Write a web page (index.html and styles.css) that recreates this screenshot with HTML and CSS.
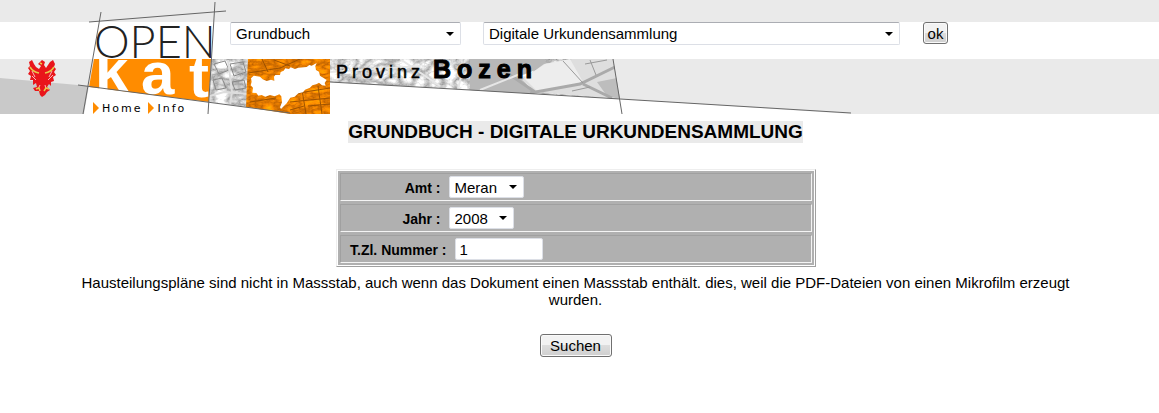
FILE: index.html
```html
<!DOCTYPE html>
<html lang="de">
<head>
  <meta charset="utf-8">
  <title>OPENkat - Grundbuch</title>
  <meta name="viewport" content="width=device-width, initial-scale=1.0">
  <link rel="stylesheet" href="styles.css">
</head>
<body>
  <header class="header">
    <svg class="banner" width="852" height="114" viewBox="0 0 852 114" role="img" aria-label="OPENkat Provinz Bozen">
      <defs>
        <filter id="aerial" x="0" y="0" width="100%" height="100%" color-interpolation-filters="sRGB">
          <feTurbulence type="turbulence" baseFrequency="0.07 0.1" numOctaves="4" seed="8"/>
          <feColorMatrix values="0.7 0 0 0 0.6  0.7 0 0 0 0.6  0.7 0 0 0 0.6  0 0 0 0 1"/>
          <feComposite in2="SourceGraphic" operator="in"/>
        </filter>
        <filter id="orangeMap" x="0" y="0" width="100%" height="100%" color-interpolation-filters="sRGB">
          <feTurbulence type="turbulence" baseFrequency="0.08 0.16" numOctaves="3" seed="4"/>
          <feColorMatrix values="0.6 0 0 0 0.74  0.4 0 0 0 0.38  0 0 0 0 0  0 0 0 0 1"/>
          <feComposite in2="SourceGraphic" operator="in"/>
        </filter>
        <clipPath id="plan"><path d="M330 59H613L620 99 470 90 330 82Z"/></clipPath>
        <clipPath id="town"><path d="M211 59H248V107L209 102Z"/></clipPath>
        <clipPath id="district"><path d="M248 59H330V114H290L246 107Z"/></clipPath>
      </defs>

      <!-- left strip -->
      <path fill="#c9c9c9" d="M0 78 89 86 84 114H0Z"/>
      <path fill="#fff" d="M89 86 290 110V114H84Z"/>
      <path fill="#fff" d="M330 82 470 90 620 99 852 114H330Z"/>

      <!-- eagle -->
      <g transform="translate(28 60)">
        <path fill="#e9151b" d="M12 2 14 0 17 2 16 5 18 8 20 5 22 2 25 0 27 4 26 7 28 9 26 12 28 15 25 17 26 21 23 22 23 26 21 24 19 27 22 30 19 32 17 35 14 37 12 35 11 31 7 31 5 28 9 27 8 23 5 25 5 20 2 20 3 16 0 14 2 11 0 8 2 6 1 2 4 0 6 4 8 7 11 9 13 6 10 4Z"/>
        <path fill="none" stroke="#fff" stroke-width=".7" d="M4 11 7 17M4 16 8 20M24 11 21 17M25 15 20 20M12 25 10 29M17 25 18 29"/>
        <path fill="none" stroke="#e7c84a" stroke-width="1.5" d="M2 7Q5 12 11 13M26 7Q23 12 17 13M8 29 11 28 12 31M16 31 18 28 21 29M12 3 14 4"/>
      </g>

      <!-- logo -->
      <path fill="#ff8c00" d="M94 59H211L209 102 89 87Z"/>
      <text class="logo-kat"><tspan x="95" y="91">k</tspan><tspan x="141" y="94">a</tspan><tspan x="189" y="97">t</tspan></text>
      <path fill="#fff" d="M95 22H212V59H95Z"/>
      <text class="logo-open" x="94" y="58">OPEN</text>

      <!-- aerial photo and district map -->
      <path fill="#999" filter="url(#aerial)" d="M211 59H248V107L209 102Z"/>
      <g clip-path="url(#town)" fill="none">
        <path stroke="#888" d="M214 64 225 61 229 70 219 74ZM230 64 243 62 246 72 234 76ZM213 80 222 78 226 88 216 90ZM232 82 244 80 246 88 235 90Z"/>
        <path stroke="#ddd" stroke-width="2" d="M210 96 224 92 248 94M228 60 232 92 230 106"/>
      </g>
      <path fill="#e07c00" filter="url(#orangeMap)" d="M248 59H330V114H290L246 107Z"/>
      <g clip-path="url(#district)" fill="none" stroke="#9c5200">
        <path d="M248 73 280 68 300 59M262 59 268 72M274 60 290 66M292 94 330 88M290 102 330 98M302 90 306 114M318 86 322 114M250 102 276 98M308 106 330 104M290 110 304 106"/>
      </g>
      <path fill="#fff" transform="translate(245 55) scale(.3333)" d="M20 80 18 70 26 62 45 65 53 73 65 78 78 74 88 77 87 65 91 60 105 60 107 51 116 47 121 40 132 42 137 37 150 42 160 38 185 36 193 30 200 32 215 24 211 34 213 45 222 50 225 62 245 75 239 84 242 92 231 91 222 83 214 88 202 91 195 98 180 104 174 112 160 115 149 125 136 128 125 145 108 162 105 157 111 142 109 124 103 118 89 124 75 120 61 125 50 120 40 122 34 114 22 113 24 98 17 91Z"/>
      <path fill="#999" filter="url(#aerial)" d="M330 59H613L620 99 470 90 330 82Z"/>
      <g clip-path="url(#plan)">
        <path fill="#b8b8b8" d="M470 59H545V66L520 76 536 96 470 92Z"/>
        <path fill="#dedede" d="M544 64 572 59H613L620 99 536 92 522 80Z"/>
        <path fill="#ededed" d="M524 78 545 64 570 59 583 82 538 92Z"/>
        <path fill="#bdbdbd" d="M597 82 617 78 620 99 607 96Z"/>
        <path fill="none" stroke="#aaa" stroke-width="3" d="M530 93 580 84 617 66M500 68 535 92M583 84 612 98"/>
        <path fill="none" stroke="#999" d="M563 61 583 83M590 60 596 75M585 64 607 60M572 91 590 87"/>
        <path fill="none" stroke="#e6e6e6" stroke-width="2" d="M330 72 420 66M400 59 440 86M465 60 458 89M480 90 520 74"/>
      </g>
      <text class="provinz" x="336" y="78">Provinz</text>
      <text class="bozen" x="433" y="78">Bozen</text>

      <!-- drafting lines -->
      <g fill="none" stroke="#666">
        <path d="M101 12 83 114M215 2 208 114M89 22 226 11M78 85 290 113"/>
        <path d="M330 82 470 90 620 99 851 113M613 59 622 114"/>
      </g>
    </svg>

    <form class="search-type">
      <select class="select-archive" aria-label="Archiv">
        <option>Grundbuch</option>
      </select>
      <select class="select-collection" aria-label="Sammlung">
        <option>Digitale Urkundensammlung</option>
      </select>
      <button type="submit" class="btn-ok">ok</button>
    </form>

    <nav class="nav">
      <a href="#">Home</a>
      <a href="#">Info</a>
    </nav>
  </header>

  <main class="content">
    <h1><span>GRUNDBUCH - DIGITALE URKUNDENSAMMLUNG</span></h1>

    <form class="search">
      <div class="fields">
        <div class="field">
          <label for="amt">Amt :</label>
          <select id="amt">
            <option>Meran</option>
          </select>
        </div>
        <div class="field">
          <label for="jahr">Jahr :</label>
          <select id="jahr">
            <option>2008</option>
          </select>
        </div>
        <div class="field">
          <label for="nummer" class="wide">T.Zl. Nummer :</label>
          <input type="text" id="nummer" value="1">
        </div>
      </div>

      <p class="note">Hausteilungspläne sind nicht in Massstab, auch wenn das Dokument einen Massstab enthält. dies, weil die PDF-Dateien von einen Mikrofilm erzeugt wurden.</p>

      <button type="submit" class="btn-search">Suchen</button>
    </form>
  </main>
</body>
</html>
```

FILE: styles.css
```css
* {
  box-sizing: border-box;
}

body {
  margin: 0;
  font-family: "Liberation Sans", Arial, sans-serif;
  font-size: 15px;
  line-height: 17px;
  background: #fff;
  color: #000;
}

/* Header */
.header {
  position: relative;
  padding-top: 22px;
  overflow: hidden;
  background: linear-gradient(#eaeaea 22px, #fff 22px, #fff 59px, #eaeaea 59px);
}

.banner {
  position: absolute;
  top: 0;
  left: 0;
}

.logo-open {
  font-family: Lato, sans-serif;
  font-weight: 300;
  font-size: 45px;
  fill: #222;
}

.logo-kat {
  font-weight: bold;
  font-size: 60px;
  fill: #fff;
}

.provinz {
  font-size: 18px;
  letter-spacing: 4px;
  stroke: #000;
  stroke-width: 0.5;
}

.bozen {
  font-size: 25px;
  font-weight: bold;
  letter-spacing: 6px;
  stroke: #000;
}

.search-type {
  position: relative;
  display: flex;
  padding-left: 230px;
}

.nav {
  position: relative;
  display: flex;
  gap: 6px;
  padding: 59px 0 0 93px;
}

.nav a {
  display: flex;
  font-family: "DejaVu Sans", Verdana, sans-serif;
  font-size: 11px;
  line-height: 10px;
  letter-spacing: 2px;
  color: #000;
  text-decoration: none;
}

.nav a:before {
  content: "";
  margin-top: -2px;
  margin-right: 3px;
  border-left: 6px solid #ff8c00;
  border-top: 6px solid transparent;
  border-bottom: 6px solid transparent;
}

/* Controls */
select, input, button {
  font: inherit;
  color: inherit;
}

select, input {
  height: 23px;
  padding: 0 5px;
  border: 1px solid #dcdfe6;
  border-top-color: #abadb3;
  border-radius: 2px;
  background-color: #fff;
}

select {
  appearance: none;
  background-image: url("data:image/svg+xml,%3Csvg xmlns='http://www.w3.org/2000/svg' width='8' height='4'%3E%3Cpath d='M0 0h8L4 4z'/%3E%3C/svg%3E");
  background-repeat: no-repeat;
  background-position: right 6px center;
}

button {
  border: 1px solid #707070;
  border-radius: 3px;
  background: linear-gradient(#f2f2f2 50%, #dddddd 50%, #cfcfcf);
  box-shadow: inset 0 0 0 1px #fafafa;
}

.select-archive {
  width: 231px;
  margin-right: 22px;
}

.select-collection {
  width: 417px;
  margin-right: 23px;
}

.btn-ok {
  width: 25px;
  height: 22px;
  padding: 0;
}

/* Content */
.content {
  text-align: center;
}

h1 {
  margin: 7px 0 26px;
  padding-right: 8px;
  font-size: 19px;
  line-height: 22px;
}

h1 span {
  display: inline-block;
  background: #eaeaea;
}

.search {
  padding-right: 8px;
}

.fields {
  display: flex;
  flex-direction: column;
  gap: 3px;
  max-width: 480px;
  margin: 0 auto;
  padding: 3px;
  border: 1px solid #a0a0a0;
  border-top-color: #eee;
  border-left-color: #eee;
  background: #b0b0b0;
  box-shadow: inset 0 0 0 1px #fff;
}

.field {
  display: flex;
  align-items: center;
  gap: 8px;
  padding: 2px 6px;
  border: 1px solid #f4f4f4;
  border-top-color: #a0a0a0;
  border-left-color: #a0a0a0;
}

.field select, .field input {
  height: 22px;
  border-color: #dcdfe6;
}

.field label {
  width: 94px;
  padding-top: 3px;
  font-size: 14px;
  font-weight: bold;
  text-align: right;
  white-space: nowrap;
}

.field label.wide {
  width: 100px;
}

#amt {
  width: 75px;
}

#jahr {
  width: 65px;
}

#nummer {
  width: 88px;
  padding: 0 4px;
}

.note {
  max-width: 1000px;
  margin: 7px auto 26px;
}

.btn-search {
  width: 72px;
  height: 23px;
  padding: 0;
}
```
